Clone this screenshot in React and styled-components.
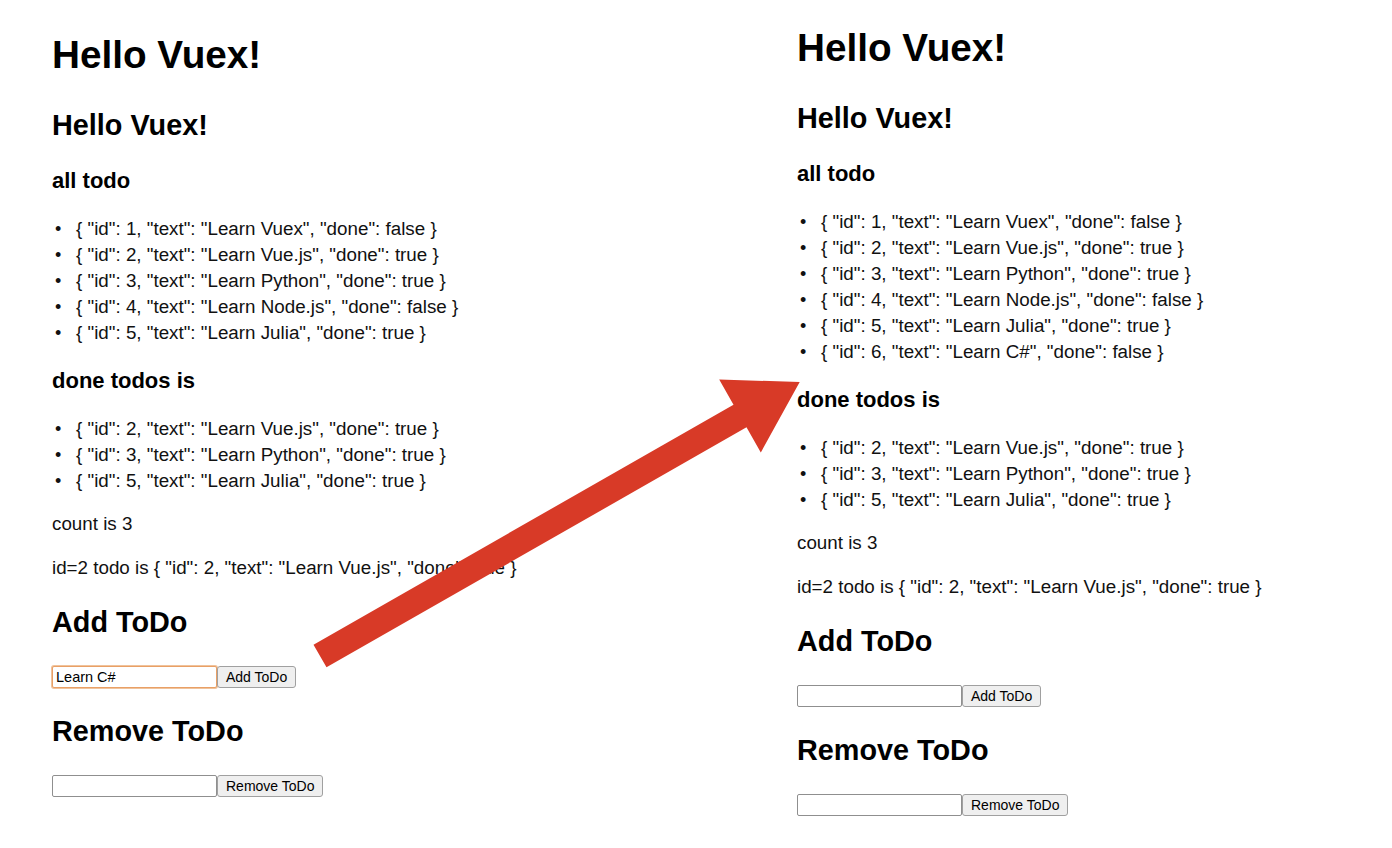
import React from 'react';
import styled, { createGlobalStyle } from 'styled-components';

const allTodos = [
  { id: 1, text: 'Learn Vuex', done: false },
  { id: 2, text: 'Learn Vue.js', done: true },
  { id: 3, text: 'Learn Python', done: true },
  { id: 4, text: 'Learn Node.js', done: false },
  { id: 5, text: 'Learn Julia', done: true },
];

const afterTodos = [...allTodos, { id: 6, text: 'Learn C#', done: false }];

const show = todo =>
  `{ "id": ${todo.id}, "text": "${todo.text}", "done": ${todo.done} }`;

const Snapshot = ({ todos, draft, shifted }) => {
  const done = todos.filter(t => t.done);
  return (
    <Panel shifted={shifted}>
      <Title>Hello Vuex!</Title>
      <Heading>Hello Vuex!</Heading>
      <Label>all todo</Label>
      <List>
        {todos.map(t => (
          <Item key={t.id}>{show(t)}</Item>
        ))}
      </List>
      <Label>done todos is</Label>
      <List>
        {done.map(t => (
          <Item key={t.id}>{show(t)}</Item>
        ))}
      </List>
      <Text>count is {done.length}</Text>
      <Text>id=2 todo is {show(todos[1])}</Text>
      <Heading>Add ToDo</Heading>
      <Row>
        <Field focused={!!draft} defaultValue={draft || ''} />
        <Button>Add ToDo</Button>
      </Row>
      <Heading>Remove ToDo</Heading>
      <Row>
        <Field />
        <Button>Remove ToDo</Button>
      </Row>
    </Panel>
  );
};

const App = () => (
  <>
    <GlobalStyle />
    <Page>
      <Snapshot todos={allTodos} draft="Learn C#" />
      <Snapshot todos={afterTodos} shifted />
      <Arrow viewBox="0 0 1392 848">
        <polygon
          points="313.5,644.7 733.5,404.7 719.2,379.5 799.7,382 760.8,452.5 746.5,427.3 326.5,667.3"
          fill="#d83a27"
        />
      </Arrow>
    </Page>
  </>
);

export default App;

const GlobalStyle = createGlobalStyle`
  body {
    margin: 0;
    background: #ffffff;
    font-family: "Liberation Sans", Arial, sans-serif;
    color: #111111;
  }
`;

const Page = styled.div`
  position: relative;
  width: 1392px;
  height: 848px;
  overflow: hidden;
  display: grid;
  grid-template-columns: 745px 1fr;
  padding-left: 52px;
  box-sizing: border-box;
`;

const Panel = styled.div`
  padding-top: ${props => (props.shifted ? '26px' : '33px')};
`;

const Title = styled.h1`
  font-size: 38.7px;
  line-height: 44px;
  font-weight: bold;
  margin: 0 0 31px;
  color: #000;
`;

const Heading = styled.h2`
  font-size: 28.8px;
  line-height: 34px;
  font-weight: bold;
  margin: 24px 0 26px;
  color: #000;
`;

const Label = styled.h3`
  font-size: 22px;
  line-height: 26px;
  font-weight: bold;
  margin: 22px 0;
  color: #000;
`;

const List = styled.ul`
  margin: 17px 0;
  padding: 0;
  list-style: none;
`;

const Item = styled.li`
  font-size: 18.8px;
  line-height: 26px;
  height: 26px;

  &::before {
    content: '•';
    display: inline-block;
    vertical-align: top;
    width: 24px;
    padding-left: 3px;
    box-sizing: border-box;
    font-size: 18px;
    line-height: 27px;
  }
`;

const Text = styled.p`
  font-size: 18.8px;
  line-height: 26px;
  margin: 17px 0 18px;
`;

const Row = styled.div`
  display: flex;
  margin: 27px 0 26px;
  height: 22px;
`;

const Field = styled.input`
  width: 165px;
  height: 22px;
  box-sizing: border-box;
  padding: 0 3px;
  font-family: "Liberation Sans", Arial, sans-serif;
  font-size: 14.5px;
  color: #000;
  border: 1px solid ${props => (props.focused ? '#e9a066' : '#8f8f8f')};
  box-shadow: ${props => (props.focused ? '0 0 0 1px #f0c39c' : 'none')};
  border-radius: 2px;
  outline: none;
`;

const Button = styled.button`
  height: 22px;
  box-sizing: border-box;
  padding: 0 8px;
  font-family: "Liberation Sans", Arial, sans-serif;
  font-size: 14px;
  color: #000;
  background: #efefef;
  border: 1px solid #a0a0a0;
  border-radius: 3px;
`;

const Arrow = styled.svg`
  position: absolute;
  left: 0;
  top: 0;
  width: 1392px;
  height: 848px;
  pointer-events: none;
`;
